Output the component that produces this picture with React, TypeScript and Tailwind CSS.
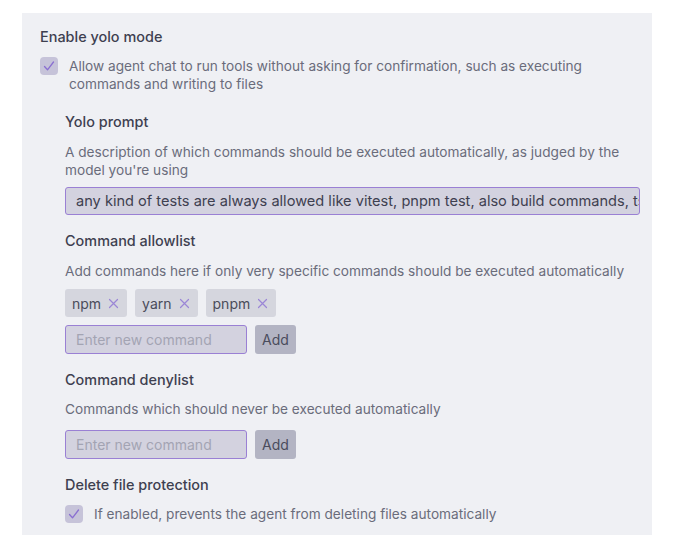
import React from "react";

function Check() {
  return (
    <span className="flex h-[18px] w-[18px] shrink-0 items-center justify-center rounded-[4px] bg-[#c6c3d9]">
      <svg width="14" height="14" viewBox="0 0 14 14" fill="none">
        <path d="M2.5 7.5 L5.5 10.8 L11.5 3" stroke="#8a6fd1" strokeWidth="1.3" strokeLinecap="round" strokeLinejoin="round" />
      </svg>
    </span>
  );
}

function Tag({ label }: { label: string }) {
  return (
    <span className="flex h-[28px] items-center gap-[7px] rounded-[3px] bg-[#d5d6de] pl-[7px] pr-[8px] text-[14px] text-[#4a4c5a]">
      {label}
      <svg width="11" height="11" viewBox="0 0 11 11" fill="none">
        <path d="M1.5 1.5 L9.5 9.5 M9.5 1.5 L1.5 9.5" stroke="#9b86d6" strokeWidth="1.2" strokeLinecap="round" />
      </svg>
    </span>
  );
}

function AddRow() {
  return (
    <div className="flex gap-[8px]">
      <div className="flex h-[29px] w-[182px] items-center rounded-[3px] border border-[#9a80d4] bg-[#d3d2df] px-[10px] text-[14px] text-[#a3a4b3]">
        Enter new command
      </div>
      <div className="flex h-[29px] w-[41px] items-center justify-center rounded-[3px] bg-[#b3b4c3] text-[14px] text-[#4a4c5c]">
        Add
      </div>
    </div>
  );
}

export default function App() {
  return (
    <div className="min-h-[557px] bg-white pt-[13px] pl-[22px]" style={{ fontFamily: "Inter, 'Noto Sans', sans-serif" }}>
      <div className="w-[630px] bg-[#eff0f4] pt-[14px] pb-[12px] pl-[18px] pr-[12px]">
        <div className="text-[14.45px] leading-[20px] font-medium text-[#3e4050]">Enable yolo mode</div>
        <div className="mt-[10px] flex gap-[11px]">
          <Check />
          <div className="text-[13.67px] leading-[18px] text-[#6a6c7b]">
            Allow agent chat to run tools without asking for confirmation, such as executing commands and writing to files
          </div>
        </div>

        <div className="pl-[25px]">
          <div className="mt-[19px] text-[14.45px] leading-[20px] font-medium text-[#3e4050]">Yolo prompt</div>
          <div className="mt-[11px] text-[13.67px] leading-[18px] text-[#6a6c7b]">
            A description of which commands should be executed automatically, as judged by the model you're using
          </div>
          <div className="mt-[8px] h-[28px] overflow-hidden whitespace-nowrap rounded-[3px] border border-[#9a80d4] bg-[#d3d2df] px-[10px] text-[14.6px] leading-[27px] text-[#3e4050]">
            any kind of tests are always allowed like vitest, pnpm test, also build commands, tsc, lint and similar
          </div>

          <div className="mt-[16px] text-[14.45px] leading-[20px] font-medium text-[#3e4050]">Command allowlist</div>
          <div className="mt-[11px] text-[13.67px] leading-[18px] text-[#6a6c7b]">
            Add commands here if only very specific commands should be executed automatically
          </div>
          <div className="mt-[9px] flex gap-[8px]">
            <Tag label="npm" />
            <Tag label="yarn" />
            <Tag label="pnpm" />
          </div>
          <div className="mt-[8px]">
            <AddRow />
          </div>

          <div className="mt-[16px] text-[14.45px] leading-[20px] font-medium text-[#3e4050]">Command denylist</div>
          <div className="mt-[10px] text-[13.67px] leading-[18px] text-[#6a6c7b]">
            Commands which should never be executed automatically
          </div>
          <div className="mt-[12px]">
            <AddRow />
          </div>

          <div className="mt-[16px] text-[14.45px] leading-[20px] font-medium text-[#3e4050]">Delete file protection</div>
          <div className="mt-[10px] flex gap-[11px]">
            <Check />
            <div className="text-[13.67px] leading-[18px] text-[#6a6c7b]">
              If enabled, prevents the agent from deleting files automatically
            </div>
          </div>
        </div>
      </div>
    </div>
  );
}
